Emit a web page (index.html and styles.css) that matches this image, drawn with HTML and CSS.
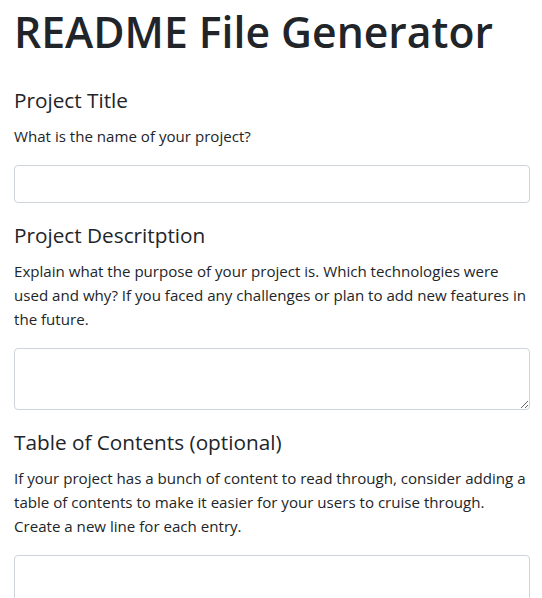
FILE: index.html
```html
<!DOCTYPE html>
<html lang="en">
<head>
<meta charset="utf-8">
<title>README File Generator</title>
<link rel="stylesheet" href="styles.css">
</head>
<body>
<main class="container">
  <h1 class="page-title">README File Generator</h1>
  <form class="readme-form">
    <div class="form-group">
      <h4 class="group-title">Project Title</h4>
      <p class="group-help">What is the name of your project?</p>
      <input class="form-control" type="text" name="title">
    </div>
    <div class="form-group">
      <h4 class="group-title">Project Descritption</h4>
      <p class="group-help">Explain what the purpose of your project is. Which technologies were used and why? If you faced any challenges or plan to add new features in the future.</p>
      <textarea class="form-control textarea" rows="2" name="description"></textarea>
    </div>
    <div class="form-group">
      <h4 class="group-title">Table of Contents (optional)</h4>
      <p class="group-help">If your project has a bunch of content to read through, consider adding a table of contents to make it easier for your users to cruise through. Create a new line for each entry.</p>
      <textarea class="form-control textarea" rows="2" name="toc"></textarea>
    </div>
  </form>
</main>
</body>
</html>
```
FILE: styles.css
```css
html {
  scrollbar-width: none;
}
html::-webkit-scrollbar {
  display: none;
}
* {
  box-sizing: border-box;
}
body {
  margin: 0;
  font-family: "Open Sans", "Noto Sans", sans-serif;
  font-size: 15.1px;
  line-height: 24px;
  color: #212529;
  background: #fff;
}
.container {
  padding: 6px 12px 0 14px;
}
.page-title {
  margin: 0 0 31px;
  font-size: 42.7px;
  font-weight: 600;
  line-height: 1.2;
  letter-spacing: 0;
}
.readme-form {
  display: flex;
  flex-direction: column;
  gap: 20px;
}
.form-group {
  display: flex;
  flex-direction: column;
}
.group-title {
  margin: 0 0 11px;
  font-size: 20.75px;
  font-weight: 400;
  line-height: 24.9px;
}
.group-help {
  margin: 0 0 17px;
}
.form-control {
  display: block;
  width: 100%;
  height: 38px;
  padding: 6px 12px;
  font-family: inherit;
  font-size: 15.1px;
  line-height: 24px;
  color: #495057;
  background: #fff;
  border: 1px solid #ced4da;
  border-radius: 4px;
  outline: none;
}
.textarea {
  height: 62px;
  resize: vertical;
}
```
